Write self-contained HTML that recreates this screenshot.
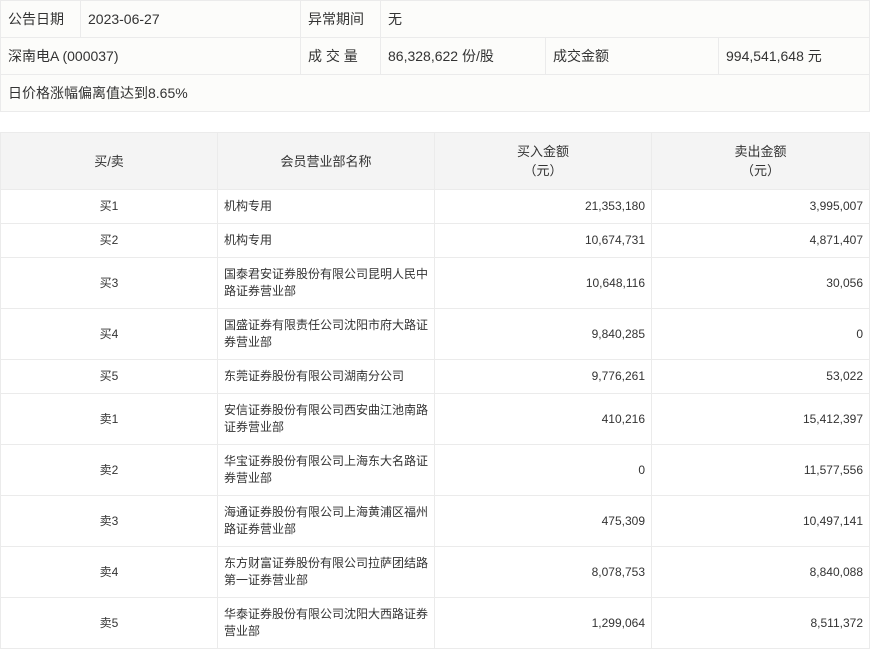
<!DOCTYPE html>
<html><head><meta charset="utf-8"><style>
body{margin:0;background:#fff;font-family:"Liberation Sans","Noto Sans CJK SC",sans-serif;color:#333;}
table{border-collapse:collapse;table-layout:fixed;position:absolute;left:0;}
td{border:1px solid #ebebeb;padding:0 7px;}
#t1{top:0;width:869px;background:#fcfcfa;font-size:14px;}
#t1 td{height:36px;}
#t2{top:132px;width:869px;font-size:12px;line-height:17px;}
#t2 th{background:#f4f4f4;border:1px solid #ebebeb;font-weight:normal;font-size:13px;height:56px;line-height:19px;padding:0;}
#t2 td{padding:0 6px;}
.c{text-align:center}.r{text-align:right}
.s td{height:33px}.d td{height:50px}
</style></head><body>
<table id="t1">
<colgroup><col style="width:80px"><col style="width:220px"><col style="width:80px"><col style="width:165px"><col style="width:173px"><col style="width:151px"></colgroup>
<tr><td>公告日期</td><td>2023-06-27</td><td>异常期间</td><td colspan="3">无</td></tr>
<tr><td colspan="2">深南电A (000037)</td><td>成 交 量</td><td>86,328,622 份/股</td><td>成交金额</td><td>994,541,648 元</td></tr>
<tr><td colspan="6">日价格涨幅偏离值达到8.65%</td></tr>
</table>
<table id="t2">
<colgroup><col style="width:217px"><col style="width:217px"><col style="width:217px"><col style="width:218px"></colgroup>
<tr><th>买/卖</th><th>会员营业部名称</th><th>买入金额<br>（元）</th><th>卖出金额<br>（元）</th></tr>
<tr class="s"><td class="c">买1</td><td>机构专用</td><td class="r">21,353,180</td><td class="r">3,995,007</td></tr>
<tr class="s"><td class="c">买2</td><td>机构专用</td><td class="r">10,674,731</td><td class="r">4,871,407</td></tr>
<tr class="d"><td class="c">买3</td><td>国泰君安证券股份有限公司昆明人民中路证券营业部</td><td class="r">10,648,116</td><td class="r">30,056</td></tr>
<tr class="d"><td class="c">买4</td><td>国盛证券有限责任公司沈阳市府大路证券营业部</td><td class="r">9,840,285</td><td class="r">0</td></tr>
<tr class="s"><td class="c">买5</td><td>东莞证券股份有限公司湖南分公司</td><td class="r">9,776,261</td><td class="r">53,022</td></tr>
<tr class="d"><td class="c">卖1</td><td>安信证券股份有限公司西安曲江池南路证券营业部</td><td class="r">410,216</td><td class="r">15,412,397</td></tr>
<tr class="d"><td class="c">卖2</td><td>华宝证券股份有限公司上海东大名路证券营业部</td><td class="r">0</td><td class="r">11,577,556</td></tr>
<tr class="d"><td class="c">卖3</td><td>海通证券股份有限公司上海黄浦区福州路证券营业部</td><td class="r">475,309</td><td class="r">10,497,141</td></tr>
<tr class="d"><td class="c">卖4</td><td>东方财富证券股份有限公司拉萨团结路第一证券营业部</td><td class="r">8,078,753</td><td class="r">8,840,088</td></tr>
<tr class="d"><td class="c">卖5</td><td>华泰证券股份有限公司沈阳大西路证券营业部</td><td class="r">1,299,064</td><td class="r">8,511,372</td></tr>
</table>
</body></html>
